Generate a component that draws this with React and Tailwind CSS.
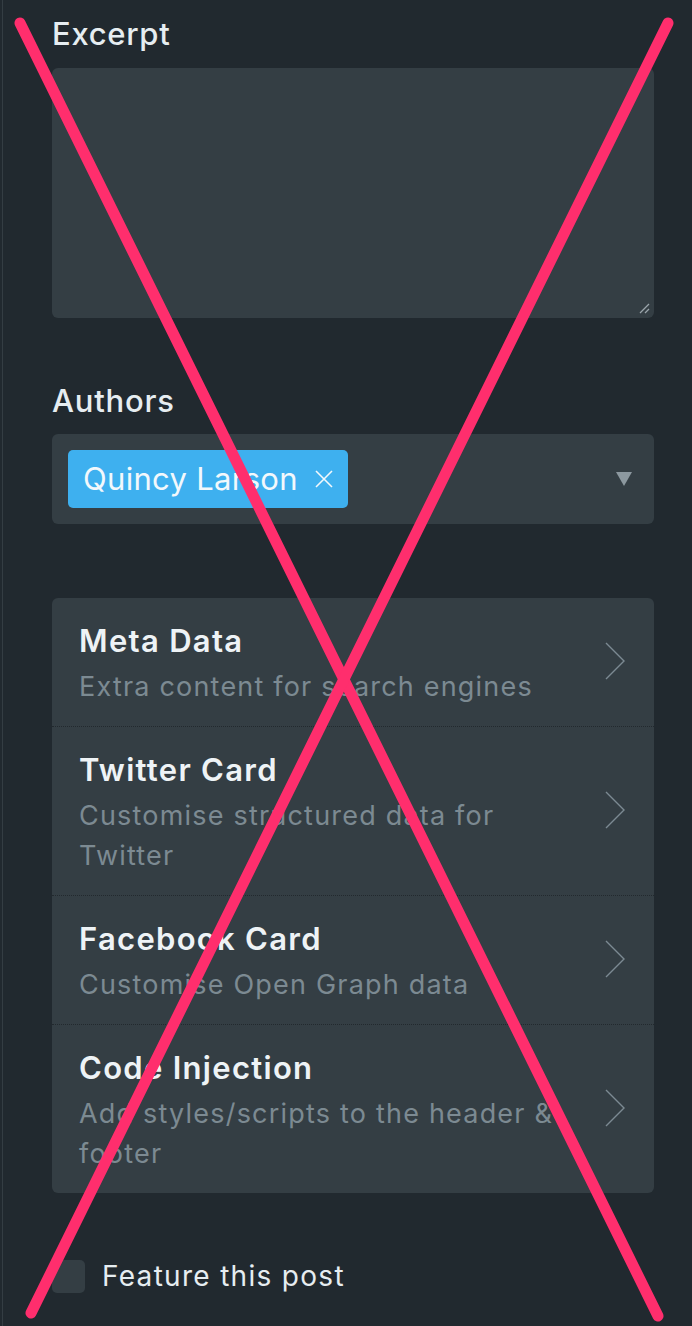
import { ChevronRight } from 'lucide-react';

const rows = [
  { title: 'Meta Data', sub: 'Extra content for search engines' },
  { title: 'Twitter Card', sub: 'Customise structured data for Twitter' },
  { title: 'Facebook Card', sub: 'Customise Open Graph data' },
  { title: 'Code Injection', sub: 'Add styles/scripts to the header & footer' },
];

export default function App() {
  return (
    <div
      className="relative w-[692px] h-[1326px] overflow-hidden bg-[#21292f] text-[#e6edf1]"
      style={{ fontFamily: 'Inter, "Noto Sans", sans-serif' }}
    >
      <div className="ml-[2px] h-full border-l border-[#343d43] pl-[49px] pr-[38px] pt-[14px] flex flex-col">
        <label className="text-[31px] leading-[40px] font-medium tracking-[0.7px]">Excerpt</label>
        <div className="relative mt-[14px] h-[250px] rounded-[6px] bg-[#343e44]">
          <svg className="absolute right-[4px] bottom-[4px]" width="12" height="12" viewBox="0 0 12 12">
            <path d="M2 11 L11 2 M7 11 L11 7" stroke="#9aa5ab" strokeWidth="1.3" />
          </svg>
        </div>

        <label className="mt-[63px] text-[31px] leading-[40px] font-medium tracking-[0.8px]">Authors</label>
        <div className="mt-[13px] h-[90px] rounded-[6px] bg-[#343e44] flex items-start justify-between pl-[16px] pr-[22px] pt-[16px]">
          <div className="h-[58px] w-[280px] rounded-[5px] bg-[#3eb0ef] flex items-center pl-[15px] gap-[17px] text-[31px] tracking-[0.3px] text-[#f2f8fc]">
            <span>Quincy Larson</span>
            <svg width="18" height="18" viewBox="0 0 18 18">
              <path d="M1 1 L17 17 M17 1 L1 17" stroke="#f2f8fc" strokeWidth="1.6" />
            </svg>
          </div>
          <svg className="mt-[22px]" width="16" height="14" viewBox="0 0 16 14">
            <path d="M0 0 H16 L8 14 Z" fill="#8c989f" />
          </svg>
        </div>

        <div className="mt-[74px] rounded-[6px] bg-[#343e44] flex flex-col">
          {rows.map((r, i) => (
            <div
              key={r.title}
              className={`flex items-center justify-between pl-[27px] pr-[29px] pt-[23px] pb-[19px] ${i > 0 ? 'border-t border-dotted border-[#22292e]' : ''}`}
            >
              <div className="flex flex-col gap-[6px] max-w-[490px]">
                <div className="text-[31px] leading-[40px] font-semibold tracking-[1.3px] text-[#eef3f6]">{r.title}</div>
                <div className="text-[27px] leading-[40px] tracking-[1.2px] text-[#7c8a92]">{r.sub}</div>
              </div>
              <svg className="-mt-[6px]" width="20" height="38" viewBox="0 0 20 38">
                <path d="M1 1 L19 19 L1 37" fill="none" stroke="#7c8a92" strokeWidth="1.4" />
              </svg>
            </div>
          ))}
        </div>

        <div className="mt-[63px] flex items-center gap-[17px]">
          <div className="w-[33px] h-[33px] rounded-[5px] bg-[#343e44]" />
          <span className="text-[28px] leading-[40px] tracking-[1.3px] text-[#e6edf1]">Feature this post</span>
        </div>
      </div>

      <svg className="absolute inset-0 pointer-events-none" width="692" height="1326" viewBox="0 0 692 1326">
        <g stroke="#ff2e6d" strokeWidth="11" strokeLinecap="round">
          <line x1="20" y1="23" x2="658" y2="1316" />
          <line x1="668" y1="23" x2="31" y2="1313" />
        </g>
      </svg>
    </div>
  );
}
